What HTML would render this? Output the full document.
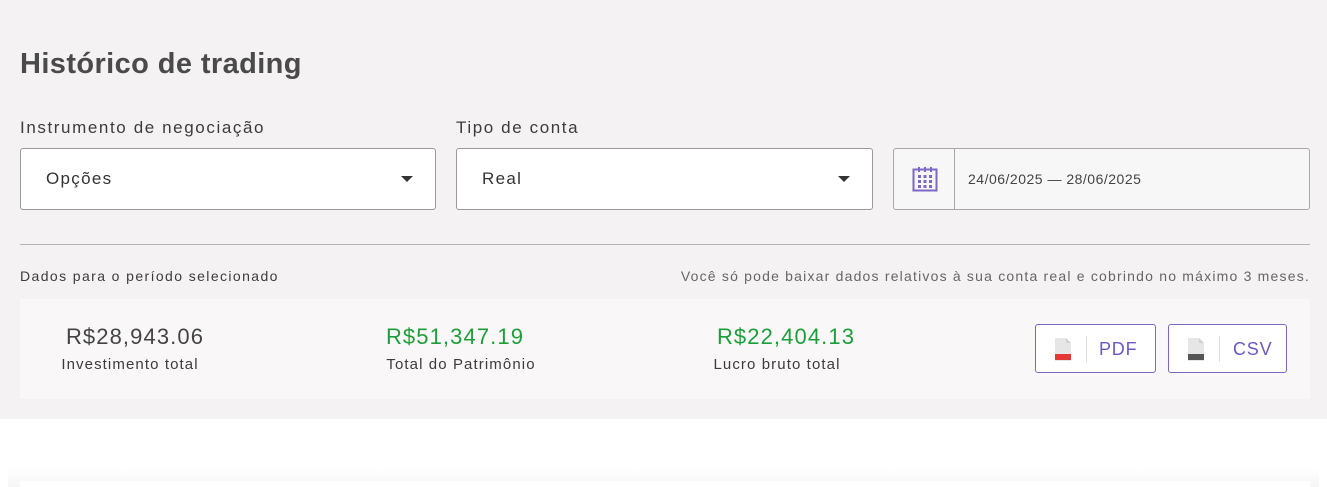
<!DOCTYPE html>
<html><head><meta charset="utf-8"><style>
*{box-sizing:border-box;margin:0;padding:0}
body{width:1327px;height:487px;background:#fff;font-family:"Liberation Sans",sans-serif;position:relative;overflow:hidden;color:#3c3c3c}
.top{position:absolute;left:0;top:0;width:1327px;height:419px;background:#f4f2f3}
.a{position:absolute;white-space:nowrap}
.sel{position:absolute;top:148px;height:62px;background:#fff;border:1px solid #9a9a9a;border-radius:3px;font-size:17px;padding-left:25px;line-height:60px;color:#333;letter-spacing:1.3px}
.tri{position:absolute;right:22px;top:27px;width:0;height:0;border-left:6px solid transparent;border-right:6px solid transparent;border-top:6px solid #333}
.btn{position:absolute;top:324px;height:49px;border:1px solid #7d68c6;border-radius:3px;background:#fff;color:#6e58c0;font-size:18px;letter-spacing:0.8px}
.v{font-size:22px;letter-spacing:1.1px;text-align:center}
.l{font-size:15px;letter-spacing:1.1px;text-align:center}
</style></head><body>
<div class="top"></div>
<div class="a" style="left:20px;top:48px;font-size:29px;font-weight:bold;color:#4a4a4a;letter-spacing:0.4px">Histórico de trading</div>
<div class="a" style="left:20px;top:118px;font-size:17px;letter-spacing:1.6px">Instrumento de negociação</div>
<div class="a" style="left:456px;top:118px;font-size:17px;letter-spacing:1.6px">Tipo de conta</div>
<div class="sel" style="left:20px;width:416px">Opções<div class="tri"></div></div>
<div class="sel" style="left:456px;width:417px">Real<div class="tri"></div></div>
<div class="a" style="left:893px;top:148px;width:417px;height:62px;border:1px solid #a8a8a8;border-radius:3px;background:#f8f7f8">
 <div class="a" style="left:60px;top:0;width:1px;height:60px;background:#a8a8a8"></div>
 <svg class="a" style="left:18px;top:17px" width="26" height="26" viewBox="0 0 26 26"><rect x="1.5" y="3.5" width="23" height="21" fill="none" stroke="#7d68c6" stroke-width="2"/><g fill="#7d68c6"><rect x="6" y="1" width="2" height="5"/><rect x="12" y="1" width="2" height="5"/><rect x="18" y="1" width="2" height="5"/><rect x="6" y="9" width="3" height="3"/><rect x="11.5" y="9" width="3" height="3"/><rect x="17" y="9" width="3" height="3"/><rect x="6" y="14" width="3" height="3"/><rect x="11.5" y="14" width="3" height="3"/><rect x="17" y="14" width="3" height="3"/><rect x="6" y="19" width="3" height="3"/><rect x="11.5" y="19" width="3" height="3"/><rect x="17" y="19" width="3" height="3"/></g></svg>
 <div class="a" style="left:74px;top:22px;font-size:14px;color:#444;letter-spacing:0.5px">24/06/2025 — 28/06/2025</div>
</div>
<div class="a" style="left:20px;top:244px;width:1290px;height:1px;background:#b5b5b5"></div>
<div class="a" style="left:20px;top:268px;font-size:14px;letter-spacing:1.4px">Dados para o período selecionado</div>
<div class="a" style="right:17px;top:268px;font-size:14px;color:#666;letter-spacing:1.2px">Você só pode baixar dados relativos à sua conta real e cobrindo no máximo 3 meses.</div>
<div class="a" style="left:20px;top:299px;width:1290px;height:100px;background:#f9f7f8"></div>
<div class="a v" style="left:20px;width:230px;top:324px;color:#444">R$28,943.06</div>
<div class="a l" style="left:20px;width:220px;top:356px">Investimento total</div>
<div class="a v" style="left:340px;width:230px;top:324px;color:#1e9e3a">R$51,347.19</div>
<div class="a l" style="left:346px;width:230px;top:356px">Total do Patrimônio</div>
<div class="a v" style="left:671px;width:230px;top:324px;color:#1e9e3a">R$22,404.13</div>
<div class="a l" style="left:662px;width:230px;top:356px">Lucro bruto total</div>
<div class="btn" style="left:1035px;width:121px">
 <svg class="a" style="left:19px;top:13px" width="18" height="23" viewBox="0 0 18 23"><path d="M0 0H11L16 5V23H0Z" fill="#e6e6e6"/><path d="M11 0V5H16" fill="#d0d0d0"/><rect x="0" y="16" width="16" height="6" fill="#e53935"/></svg>
 <div class="a" style="left:50px;top:11px;width:1px;height:26px;background:#ddd"></div>
 <div class="a" style="left:63px;top:14px">PDF</div>
</div>
<div class="btn" style="left:1168px;width:119px">
 <svg class="a" style="left:19px;top:13px" width="18" height="23" viewBox="0 0 18 23"><path d="M0 0H11L16 5V23H0Z" fill="#e6e6e6"/><path d="M11 0V5H16" fill="#d0d0d0"/><rect x="0" y="16" width="16" height="6" fill="#555"/></svg>
 <div class="a" style="left:50px;top:11px;width:1px;height:26px;background:#ddd"></div>
 <div class="a" style="left:64px;top:14px">CSV</div>
</div>
<div class="a" style="left:8px;top:468px;width:1311px;height:19px;background:linear-gradient(#fff,#f6f6f6)"></div>
<div class="a" style="left:20px;top:481px;width:1290px;height:6px;background:#fff"></div>
</body></html>
